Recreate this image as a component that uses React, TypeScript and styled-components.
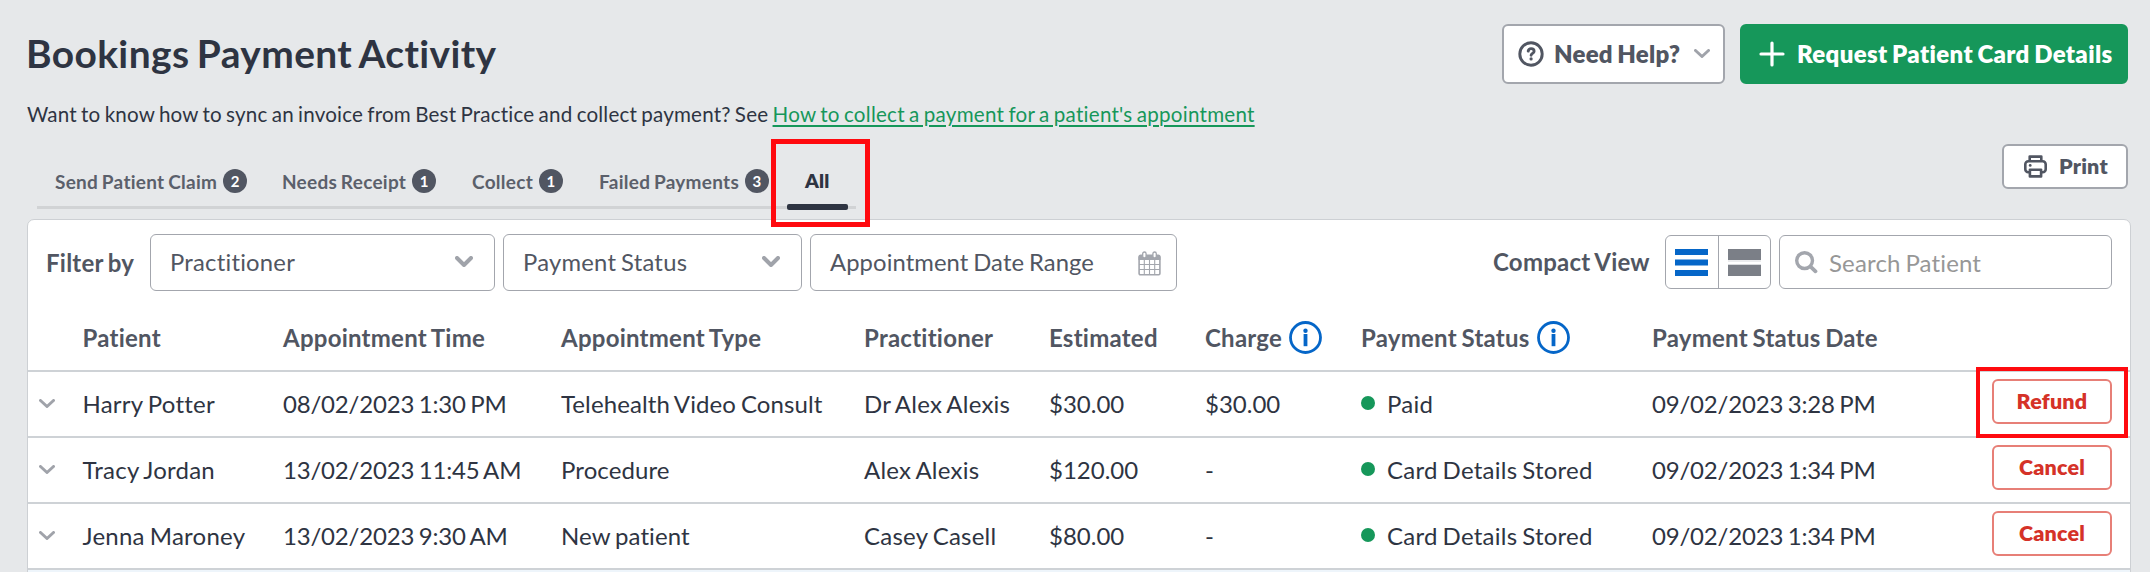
import React from "react";
import styled, { createGlobalStyle } from "styled-components";

const GlobalStyle = createGlobalStyle`
  * { box-sizing: border-box; letter-spacing: 0.01em; word-spacing: -0.06em; }
  body {
    margin: 0;
    background: #e6e8ea;
    color: #2e3442;
    font-family: Lato, sans-serif;
    font-variant-ligatures: none;
    overflow: hidden;
  }
  button, input { font-family: inherit; font-variant-ligatures: none; }
  svg { display: block; flex: none; }
`;

const Page = styled.main`
  height: 572px;
  padding: 24px 19px 0 27px;
  overflow: hidden;
`;

const Header = styled.header`
  display: flex;
  height: 60px;
  gap: 15px;
  padding-right: 3px;
`;

const Title = styled.h1`
  margin: 0 auto 0 -1px;
  font-size: 38.9px;
  font-weight: 700;
  line-height: 58px;
`;

const Button = styled.button<{ $primary?: boolean; $small?: boolean }>`
  display: flex;
  align-items: center;
  margin: 0;
  padding: 0 0 1px;
  flex: none;
  white-space: nowrap;
  border: 2px solid ${(p) => (p.$primary ? "#16975a" : "#a3a6ad")};
  border-radius: 6px;
  background: ${(p) => (p.$primary ? "#16975a" : "#fff")};
  color: ${(p) => (p.$primary ? "#fff" : "#515662")};
  font-weight: 800;
  font-size: ${(p) => (p.$small ? 21.5 : 24)}px;
`;

const HelpButton = styled(Button)`
  width: 223px;
  padding: 0 13px 1px 14px;
  gap: 10px;
  & > svg:last-child { margin-left: auto; }
`;

const RequestButton = styled(Button)`
  width: 388px;
  padding-left: 17px;
  gap: 12px;
  letter-spacing: 0.35px;
`;

const PrintButton = styled(Button)`
  width: 126px;
  height: 45px;
  margin: 5px 3px 0 auto;
  padding-left: 20px;
  gap: 12px;
`;

const Intro = styled.p`
  margin: 14px 0 0;
  font-size: 20.6px;
  line-height: 32px;
  letter-spacing: 0.18px;
  word-spacing: -1.2px;
  a {
    color: #16975a;
    text-decoration: underline;
    text-decoration-thickness: 2px;
    text-underline-offset: 3px;
    letter-spacing: 0.24px;
  }
`;

const TabBar = styled.div`
  display: flex;
  height: 80px;
  margin-top: 9px;
  align-items: flex-start;
`;

const Tabs = styled.nav`
  display: flex;
  align-items: center;
  width: 819px;
  height: 70px;
  margin-left: 10px;
  padding-left: 18px;
  border-bottom: 3px solid #d1d3d5;
`;

const Tab = styled.span<{ $width: number }>`
  display: flex;
  align-items: center;
  gap: 6px;
  width: ${(p) => p.$width}px;
  flex: none;
  color: #5b606b;
  font-size: 19px;
  font-weight: 700;
  line-height: 24px;
  letter-spacing: 0.27px;
  margin-top: 19px;
  white-space: nowrap;
`;

const Count = styled.span`
  width: 24px;
  height: 24px;
  border-radius: 50%;
  background: #515662;
  color: #fff;
  font-size: 15px;
  line-height: 24px;
  text-align: center;
  margin-top: -2px;
`;

const ActiveTab = styled.span`
  position: relative;
  color: #2e3442;
  font-size: 19.5px;
  font-weight: 800;
  line-height: 24px;
  margin-top: 17px;
  &::after {
    content: "";
    position: absolute;
    left: -18px;
    top: 35px;
    width: 61px;
    height: 6px;
    border-radius: 2px;
    background: #2e3442;
  }
`;

const Highlight = styled.span<{ $inset: string; $line: number }>`
  position: absolute;
  inset: ${(p) => p.$inset};
  border: ${(p) => p.$line}px solid #ff0a0f;
  pointer-events: none;
  z-index: 1;
`;

const Card = styled.section`
  height: 420px;
  border: 1px solid #cdd0d4;
  border-radius: 7px 7px 0 0;
  background: #fff;
`;

const Filters = styled.div`
  display: flex;
  align-items: center;
  height: 85px;
  padding: 0 18px 0 18px;
  color: #515662;
  font-size: 24px;
`;

const Label = styled.span<{ $width: number }>`
  width: ${(p) => p.$width}px;
  padding-bottom: 1px;
  font-weight: 700;
`;

const Field = styled.div<{ $width: number }>`
  display: flex;
  align-items: center;
  justify-content: space-between;
  width: ${(p) => p.$width}px;
  height: 57px;
  margin-right: 8px;
  padding: 0 21px 2px 19px;
  border: 1px solid #a3a6ad;
  border-radius: 6px;
  font-size: 23.8px;
`;

const DateField = styled(Field)`
  padding-right: 15px;
  letter-spacing: 0.1px;
  svg { margin-top: 4px; }
`;

const ViewToggle = styled.div`
  display: flex;
  width: 106px;
  height: 54px;
  margin-right: 8px;
  border: 1px solid #a3a6ad;
  border-radius: 6px;
`;

const ViewOption = styled.span`
  display: flex;
  flex: 1;
  align-items: center;
  justify-content: center;
  & + & { border-left: 1px solid #a3a6ad; }
`;

const Right = styled.div`
  display: flex;
  align-items: center;
  margin: -1px 0 0 auto;
`;

const Search = styled.label`
  display: flex;
  align-items: center;
  gap: 11px;
  width: 333px;
  height: 54px;
  padding-left: 15px;
  border: 1px solid #a3a6ad;
  border-radius: 6px;
  input {
    width: 280px;
    padding: 0;
    border: 0;
    outline: 0;
    background: none;
    font-size: 24px;
    letter-spacing: 0.15px;
  }
  input::placeholder { color: #979797; opacity: 1; letter-spacing: 0.15px; }
`;

const Row = styled.div<{ $head?: boolean }>`
  display: grid;
  grid-template-columns: 54.5px 200.5px 278px 303px 185px 156px 156px 291px 1fr 120px;
  align-items: center;
  height: ${(p) => (p.$head ? 67 : 66)}px;
  padding: 0 18px ${(p) => (p.$head ? 0 : 2)}px 0;
  border-bottom: 2px solid #ced2d6;
  color: ${(p) => (p.$head ? "#515662" : "#2e3442")};
  font-size: 24px;
  font-weight: ${(p) => (p.$head ? 700 : 400)};
  white-space: nowrap;
`;

const Cell = styled.span`
  display: flex;
  align-items: center;
  gap: 7px;
`;

const Numeric = styled(Cell)`
  letter-spacing: -0.19px;
`;

const Money = styled(Cell)`
  letter-spacing: 0;
`;

const TypeCell = styled(Cell)`
  letter-spacing: 0.1px;
`;

const Toggle = styled.span`
  padding-left: 11px;
`;

const Status = styled.span`
  display: flex;
  align-items: center;
  gap: 12px;
  &::before {
    content: "";
    width: 14px;
    height: 14px;
    border-radius: 50%;
    background: #16975a;
  }
`;

const Action = styled.span`
  position: relative;
  justify-self: end;
  margin-top: -3px;
`;

const DangerButton = styled(Button)`
  width: 120px;
  height: 45px;
  justify-content: center;
  border-color: #e77f77;
  color: #d53228;
`;

const Chevron = ({ w = 16, h = 9, s = 3, c = "#a0a3aa" }) => (
  <svg width={w} height={h} viewBox={`0 0 ${w} ${h}`} fill="none" stroke={c} strokeWidth={s} strokeLinecap="round" strokeLinejoin="round">
    <path d={`M${s / 2} ${s / 2}L${w / 2} ${h - s / 2}L${w - s / 2} ${s / 2}`} />
  </svg>
);

const HelpIcon = () => (
  <svg width="26" height="26" viewBox="0 0 26 26" fill="none" stroke="#515662" strokeWidth="2.9" strokeLinecap="round">
    <circle cx="13" cy="13" r="11.2" />
    <path d="M10.2 10.1c.4-2 1.6-2.5 2.9-2.5 1.7 0 3 1.1 3 2.6 0 2.1-3 2.2-3 4.1" />
    <path d="M13.1 17.8v.1" strokeWidth="3.2" />
  </svg>
);

const PlusIcon = () => (
  <svg width="26" height="26" viewBox="0 0 26 26" stroke="#fff" strokeWidth="3.2" strokeLinecap="round">
    <path d="M13 2v22M2 13h22" />
  </svg>
);

const PrintIcon = () => (
  <svg width="23" height="23" viewBox="0 0 23 23" fill="none" stroke="#515662" strokeWidth="2.6" strokeLinejoin="round">
    <path d="M5.7 6.2V1.6h11.6v4.6" />
    <path d="M5.7 17.2H4.3a3 3 0 0 1-3-3V9.200a3 3 0 0 1 3-3h14.400a3 3 0 0 1 3 3v5a3 3 0 0 1-3 3h-1.400" />
    <path d="M5.9 14.7h11.2v6.7H5.9z" />
    <circle cx="6.2" cy="10.4" r="1.4" fill="#515662" stroke="none" />
  </svg>
);

const CalendarIcon = () => (
  <svg width="23" height="25" viewBox="0 0 23 25" fill="none" stroke="#a3a6ad">
    <path d="M.5 5.5a2 2 0 0 1 2-2h18a2 2 0 0 1 2 2V9H.5z" fill="#a3a6ad" stroke="none" />
    <rect x="1.1" y="5" width="20.8" height="18.7" rx="1.2" strokeWidth="1.6" />
    <path d="M6.3 9v14M11.5 9v14M16.7 9v14M1 13.5h21M1 18.5h21" strokeWidth="1.1" />
    <rect x="4.7" y="1" width="3.4" height="6" rx="1.7" fill="#fff" strokeWidth="1.3" />
    <rect x="14.9" y="1" width="3.4" height="6" rx="1.7" fill="#fff" strokeWidth="1.3" />
  </svg>
);

const SearchIcon = () => (
  <svg width="23" height="23" viewBox="0 0 23 23" fill="none" stroke="#a3a6ad" strokeLinecap="round">
    <circle cx="9.6" cy="9.6" r="7.9" strokeWidth="3.4" />
    <path d="M15.8 15.8l4.7 4.5" strokeWidth="3.8" />
  </svg>
);

const InfoIcon = () => (
  <svg width="33" height="33" viewBox="0 0 33 33" fill="none" stroke="#0566c8">
    <circle cx="16.5" cy="16.5" r="15" strokeWidth="2.8" />
    <path d="M16.5 13v12.2" strokeWidth="3.8" />
    <circle cx="16.5" cy="9.8" r="2.2" fill="#0566c8" stroke="none" />
  </svg>
);

const CompactIcon = () => (
  <svg width="33" height="27" viewBox="0 0 33 27" fill="#0566c8">
    <path d="M0 0h33v6H0zM0 10.5h33v6H0zM0 21h33v6H0z" />
  </svg>
);

const ComfortableIcon = () => (
  <svg width="33" height="27" viewBox="0 0 33 27">
    <path d="M0 0h33v11H0zM0 16h33v11H0z" fill="#7b7f87" />
    <path d="M0 11.5h33v1H0zM0 15h33v1H0z" fill="#d8dadd" />
  </svg>
);

const tabs = [
  { label: "Send Patient Claim", count: 2, width: 227 },
  { label: "Needs Receipt", count: 1, width: 190 },
  { label: "Collect", count: 1, width: 127 },
  { label: "Failed Payments", count: 3, width: 206 },
];

const headings = ["Patient", "Appointment Time", "Appointment Type", "Practitioner", "Estimated", "Charge", "Payment Status", "Payment Status Date"];

const rows = [
  { patient: "Harry Potter", time: "08/02/2023 1:30 PM", type: "Telehealth Video Consult", practitioner: "Dr Alex Alexis", estimated: "$30.00", charge: "$30.00", status: "Paid", date: "09/02/2023 3:28 PM", action: "Refund" },
  { patient: "Tracy Jordan", time: "13/02/2023 11:45 AM", type: "Procedure", practitioner: "Alex Alexis", estimated: "$120.00", charge: "-", status: "Card Details Stored", date: "09/02/2023 1:34 PM", action: "Cancel" },
  { patient: "Jenna Maroney", time: "13/02/2023 9:30 AM", type: "New patient", practitioner: "Casey Casell", estimated: "$80.00", charge: "-", status: "Card Details Stored", date: "09/02/2023 1:34 PM", action: "Cancel" },
];

const NextRow = styled.div`
  height: 50px;
  background: #eef5fb;
`;

export default function App() {
  return (
    <Page>
      <GlobalStyle />
      <Header>
        <Title>Bookings Payment Activity</Title>
        <HelpButton><HelpIcon />Need Help?<Chevron /></HelpButton>
        <RequestButton $primary><PlusIcon />Request Patient Card Details</RequestButton>
      </Header>
      <Intro>
        Want to know how to sync an invoice from Best Practice and collect payment? See{" "}
        <a>How to collect a payment for a patient's appointment</a>
      </Intro>
      <TabBar>
        <Tabs>
          {tabs.map((t) => (
            <Tab key={t.label} $width={t.width}>{t.label}<Count>{t.count}</Count></Tab>
          ))}
          <ActiveTab>
            All
            <Highlight $inset="-30px -40px -34px -34px" $line={5} />
          </ActiveTab>
        </Tabs>
        <PrintButton $small><PrintIcon />Print</PrintButton>
      </TabBar>
      <Card>
        <Filters>
          <Label $width={104}>Filter by</Label>
          <Field $width={345}>Practitioner<Chevron w={18} h={11} s={4} /></Field>
          <Field $width={299}>Payment Status<Chevron w={18} h={11} s={4} /></Field>
          <DateField $width={367}>Appointment Date Range<CalendarIcon /></DateField>
          <Right>
            <Label $width={172}>Compact View</Label>
            <ViewToggle>
              <ViewOption><CompactIcon /></ViewOption>
              <ViewOption><ComfortableIcon /></ViewOption>
            </ViewToggle>
            <Search><SearchIcon /><input placeholder="Search Patient" /></Search>
          </Right>
        </Filters>
        <Row $head>
          <span />
          {headings.map((h) => (
            <Cell key={h}>{h}{(h === "Charge" || h === "Payment Status") && <InfoIcon />}</Cell>
          ))}
        </Row>
        {rows.map((r) => (
          <Row key={r.patient}>
            <Toggle><Chevron /></Toggle>
            <Cell>{r.patient}</Cell>
            <Numeric>{r.time}</Numeric>
            <TypeCell>{r.type}</TypeCell>
            <Cell>{r.practitioner}</Cell>
            <Money>{r.estimated}</Money>
            <Money>{r.charge}</Money>
            <Status>{r.status}</Status>
            <Numeric>{r.date}</Numeric>
            <Action>
              <DangerButton $small>{r.action}</DangerButton>
              {r.action === "Refund" && <Highlight $inset="-12px -16px -14px -16px" $line={4} />}
            </Action>
          </Row>
        ))}
        <NextRow />
      </Card>
    </Page>
  );
}
